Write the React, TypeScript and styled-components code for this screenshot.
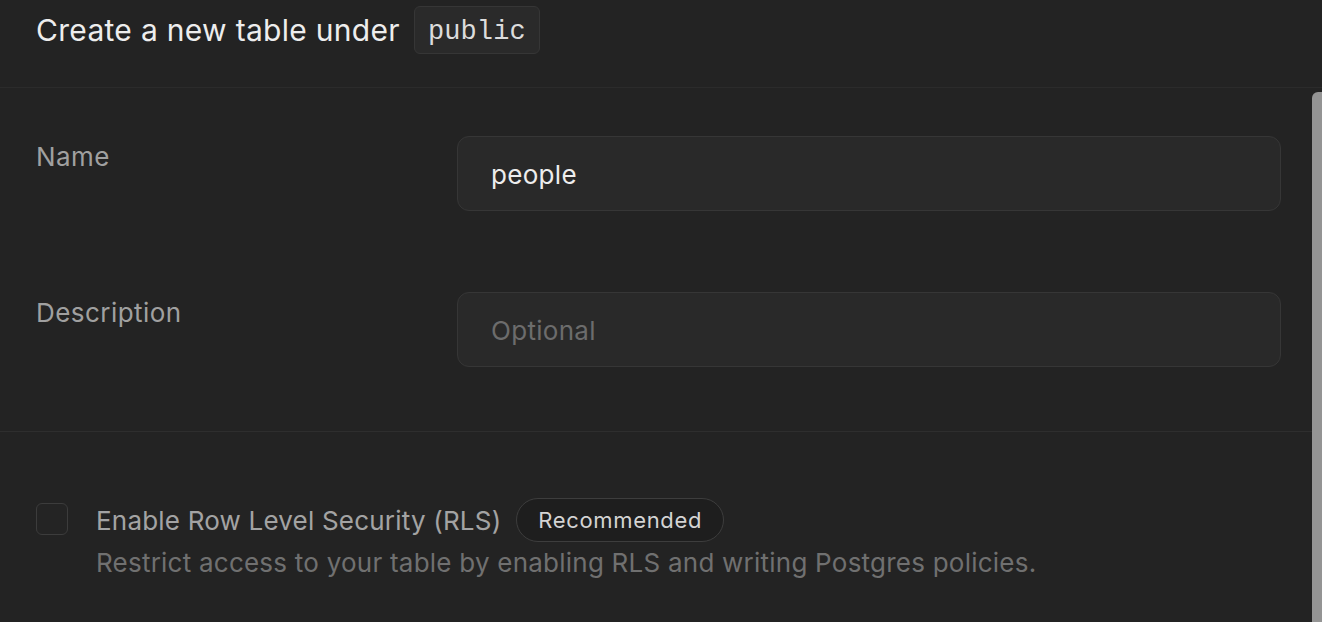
import styled, { createGlobalStyle } from "styled-components";

const GlobalStyle = createGlobalStyle`
  html, body {
    margin: 0;
    padding: 0;
    background: #232323;
  }
  * {
    box-sizing: border-box;
  }
`;

const Panel = styled.div`
  position: relative;
  width: 1322px;
  height: 622px;
  overflow: hidden;
  background: #232323;
  font-family: Inter, "Noto Sans", sans-serif;
  color: #ededed;
  letter-spacing: 0.25px;
`;

const Header = styled.header`
  display: flex;
  align-items: flex-start;
  gap: 14px;
  height: 88px;
  padding: 6px 36px 0;
  border-bottom: 1px solid #2b2b2b;
`;

const Title = styled.h1`
  margin: 0;
  font-size: 30px;
  font-weight: 400;
  line-height: 48px;
  color: #ededed;
  letter-spacing: 0.3px;
`;

const Code = styled.code`
  display: inline-flex;
  align-items: center;
  height: 48px;
  padding: 4px 13px 0;
  border: 1.5px solid #363636;
  border-radius: 6px;
  background: #2a2a2a;
  font-family: "Liberation Mono", "DejaVu Sans Mono", monospace;
  font-size: 27px;
  letter-spacing: 0.1px;
  color: #dcdcdc;
`;

const FormSection = styled.section`
  display: flex;
  flex-direction: column;
  gap: 81px;
  padding: 48px 41px 64px 36px;
  border-bottom: 1px solid #2e2e2e;
`;

const FieldRow = styled.div`
  display: grid;
  grid-template-columns: 421px 1fr;
  align-items: start;
`;

const Label = styled.label`
  font-size: 26px;
  line-height: 42px;
  color: #a0a0a0;
  letter-spacing: 0.45px;
`;

const Input = styled.input`
  width: 100%;
  height: 75px;
  padding: 2px 33px 0;
  border: 1.5px solid #363636;
  border-radius: 12px;
  background: #292929;
  font-family: inherit;
  font-size: 26px;
  letter-spacing: 0.3px;
  color: #ededed;
  outline: none;
  &::placeholder {
    color: #6c6c6c;
  }
`;

const RlsSection = styled.section`
  display: flex;
  align-items: flex-start;
  gap: 28px;
  padding: 66px 36px 0;
`;

const Checkbox = styled.span`
  flex: none;
  width: 32px;
  height: 32px;
  margin-top: 5px;
  border: 1.5px solid #3c3c3c;
  border-radius: 6px;
  background: #242424;
`;

const RlsText = styled.div`
  display: flex;
  flex-direction: column;
`;

const RlsTitleLine = styled.div`
  display: flex;
  align-items: center;
  gap: 15px;
  height: 44px;
`;

const RlsTitle = styled.span`
  font-size: 26px;
  letter-spacing: 0.2px;
  color: #a3a3a3;
`;

const Badge = styled.span`
  display: inline-flex;
  align-items: center;
  height: 44px;
  padding: 0 21px;
  border: 1.5px solid #3d3d3d;
  border-radius: 22px;
  background: #1e1e1e;
  font-size: 22px;
  letter-spacing: 0.65px;
  color: #d4d4d4;
`;

const RlsDescription = styled.p`
  margin: 2px 0 0;
  font-size: 26px;
  line-height: 38px;
  letter-spacing: 0.23px;
  color: #707070;
`;

const ScrollThumb = styled.div`
  position: absolute;
  top: 92px;
  right: 0;
  bottom: 0;
  width: 10px;
  border-top-left-radius: 6px;
  background: #949494;
`;

export default function App() {
  return (
    <Panel>
      <GlobalStyle />
      <Header>
        <Title>Create a new table under</Title>
        <Code>public</Code>
      </Header>
      <FormSection>
        <FieldRow>
          <Label>Name</Label>
          <Input defaultValue="people" />
        </FieldRow>
        <FieldRow>
          <Label>Description</Label>
          <Input placeholder="Optional" />
        </FieldRow>
      </FormSection>
      <RlsSection>
        <Checkbox />
        <RlsText>
          <RlsTitleLine>
            <RlsTitle>Enable Row Level Security (RLS)</RlsTitle>
            <Badge>Recommended</Badge>
          </RlsTitleLine>
          <RlsDescription>
            Restrict access to your table by enabling RLS and writing Postgres policies.
          </RlsDescription>
        </RlsText>
      </RlsSection>
      <ScrollThumb />
    </Panel>
  );
}
